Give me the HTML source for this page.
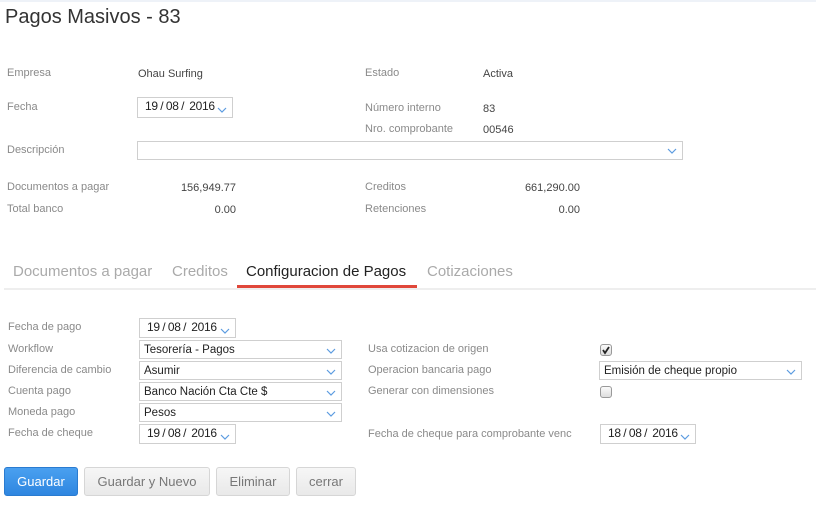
<!DOCTYPE html>
<html><head><meta charset="utf-8"><style>
*{box-sizing:border-box;margin:0;padding:0}
body{width:816px;height:510px;background:#fff;font-family:"Liberation Sans",sans-serif;position:relative;overflow:hidden}
.a{position:absolute;white-space:nowrap}
.l{font-size:11px;color:#8a8a8a;line-height:14px}
.v{font-size:11px;color:#444;line-height:14px}
.r{text-align:right}
.box{position:absolute;border:1px solid #cfcfcf;background:#fff;font-size:11.5px;color:#222;line-height:18px;padding-left:4px}
.box svg{position:absolute;right:5px;top:7px}
.date{padding-left:7px;font-size:12px;letter-spacing:-0.3px;word-spacing:-0.5px;line-height:17px}
.tab{font-size:15px;color:#aaa;line-height:18px}
.btn{position:absolute;top:467px;height:29px;border:1px solid #d6d6d6;border-radius:3px;background:linear-gradient(#f6f6f6,#e9e9e9);color:#777;font-size:13px;text-align:center;line-height:27px}
.cb{position:absolute;width:12px;height:12px;border:1px solid #999;border-radius:3px;background:linear-gradient(#fafafa,#ddd)}
</style></head><body>
<div class="a" style="left:0;top:0;width:816px;height:2px;background:#eef2f8"></div>
<div class="a" style="left:5px;top:5px;font-size:20px;color:#333;line-height:24px">Pagos Masivos - 83</div>

<div class="a l" style="left:7px;top:66px">Empresa</div>
<div class="a v" style="left:138px;top:67px">Ohau Surfing</div>
<div class="a l" style="left:365px;top:66px">Estado</div>
<div class="a v" style="left:483px;top:67px">Activa</div>

<div class="a l" style="left:7px;top:100px">Fecha</div>
<div class="box date" style="left:137px;top:97px;width:96px;height:21px">19 / 08 /&nbsp; 2016<svg width="10" height="6" style="top:9px"><path d="M1 1l4 4 4-4" stroke="#5b9be0" fill="none" stroke-width="1.2"/></svg></div>
<div class="a l" style="left:365px;top:101px">Número interno</div>
<div class="a v" style="left:483px;top:102px">83</div>
<div class="a l" style="left:365px;top:122px">Nro. comprobante</div>
<div class="a v" style="left:483px;top:123px">00546</div>

<div class="a l" style="left:7px;top:143px">Descripción</div>
<div class="box" style="left:137px;top:141px;width:546px;height:19px"><svg width="10" height="6" style="top:6px"><path d="M1 1l4 4 4-4" stroke="#5b9be0" fill="none" stroke-width="1.2"/></svg></div>

<div class="a l" style="left:7px;top:180px">Documentos a pagar</div>
<div class="a v r" style="left:130px;width:106px;top:181px">156,949.77</div>
<div class="a l" style="left:7px;top:202px">Total banco</div>
<div class="a v r" style="left:130px;width:106px;top:203px">0.00</div>
<div class="a l" style="left:365px;top:180px">Creditos</div>
<div class="a v r" style="left:470px;width:110px;top:181px">661,290.00</div>
<div class="a l" style="left:365px;top:202px">Retenciones</div>
<div class="a v r" style="left:470px;width:110px;top:203px">0.00</div>

<div class="a tab" style="left:13px;top:263px">Documentos a pagar</div>
<div class="a tab" style="left:172px;top:263px">Creditos</div>
<div class="a tab" style="left:246px;top:263px;color:#222">Configuracion de Pagos</div>
<div class="a tab" style="left:427px;top:263px">Cotizaciones</div>
<div class="a" style="left:4px;top:288px;width:812px;height:2px;background:#eee"></div>
<div class="a" style="left:237px;top:285px;width:180px;height:3px;background:#e0473a"></div>

<div class="a l" style="left:8px;top:320px">Fecha de pago</div>
<div class="box date" style="left:139px;top:318px;width:97px;height:20px">19 / 08 /&nbsp; 2016<svg width="10" height="6" style="top:9px"><path d="M1 1l4 4 4-4" stroke="#5b9be0" fill="none" stroke-width="1.2"/></svg></div>
<div class="a l" style="left:8px;top:342px">Workflow</div>
<div class="box" style="left:139px;top:340px;width:203px;height:19px">Tesorería - Pagos<svg width="10" height="6"><path d="M1 1l4 4 4-4" stroke="#5b9be0" fill="none" stroke-width="1.2"/></svg></div>
<div class="a l" style="left:8px;top:363px">Diferencia de cambio</div>
<div class="box" style="left:139px;top:361px;width:203px;height:19px">Asumir<svg width="10" height="6"><path d="M1 1l4 4 4-4" stroke="#5b9be0" fill="none" stroke-width="1.2"/></svg></div>
<div class="a l" style="left:8px;top:384px">Cuenta pago</div>
<div class="box" style="left:139px;top:382px;width:203px;height:19px">Banco Nación Cta Cte $<svg width="10" height="6"><path d="M1 1l4 4 4-4" stroke="#5b9be0" fill="none" stroke-width="1.2"/></svg></div>
<div class="a l" style="left:8px;top:405px">Moneda pago</div>
<div class="box" style="left:139px;top:403px;width:203px;height:19px">Pesos<svg width="10" height="6"><path d="M1 1l4 4 4-4" stroke="#5b9be0" fill="none" stroke-width="1.2"/></svg></div>
<div class="a l" style="left:8px;top:426px">Fecha de cheque</div>
<div class="box date" style="left:139px;top:424px;width:97px;height:20px">19 / 08 /&nbsp; 2016<svg width="10" height="6" style="top:9px"><path d="M1 1l4 4 4-4" stroke="#5b9be0" fill="none" stroke-width="1.2"/></svg></div>

<div class="a l" style="left:368px;top:342px">Usa cotizacion de origen</div>
<div class="cb" style="left:600px;top:344px"><svg width="10" height="10" style="position:absolute;left:0;top:0"><path d="M2 5l2 3 4-6" stroke="#222" fill="none" stroke-width="1.8"/></svg></div>
<div class="a l" style="left:368px;top:363px">Operacion bancaria pago</div>
<div class="box" style="left:599px;top:361px;width:203px;height:19px">Emisión de cheque propio<svg width="10" height="6"><path d="M1 1l4 4 4-4" stroke="#5b9be0" fill="none" stroke-width="1.2"/></svg></div>
<div class="a l" style="left:368px;top:384px">Generar con dimensiones</div>
<div class="cb" style="left:600px;top:386px"></div>
<div class="a l" style="left:368px;top:427px">Fecha de cheque para comprobante venc</div>
<div class="box date" style="left:600px;top:424px;width:96px;height:20px">18 / 08 /&nbsp; 2016<svg width="10" height="6" style="top:9px"><path d="M1 1l4 4 4-4" stroke="#5b9be0" fill="none" stroke-width="1.2"/></svg></div>

<div class="btn" style="left:4px;width:74px;background:linear-gradient(#4aa0f0,#2f86e0);border-color:#2a7bd0;color:#fff">Guardar</div>
<div class="btn" style="left:84px;width:126px">Guardar y Nuevo</div>
<div class="btn" style="left:216px;width:74px">Eliminar</div>
<div class="btn" style="left:296px;width:60px">cerrar</div>
</body></html>
